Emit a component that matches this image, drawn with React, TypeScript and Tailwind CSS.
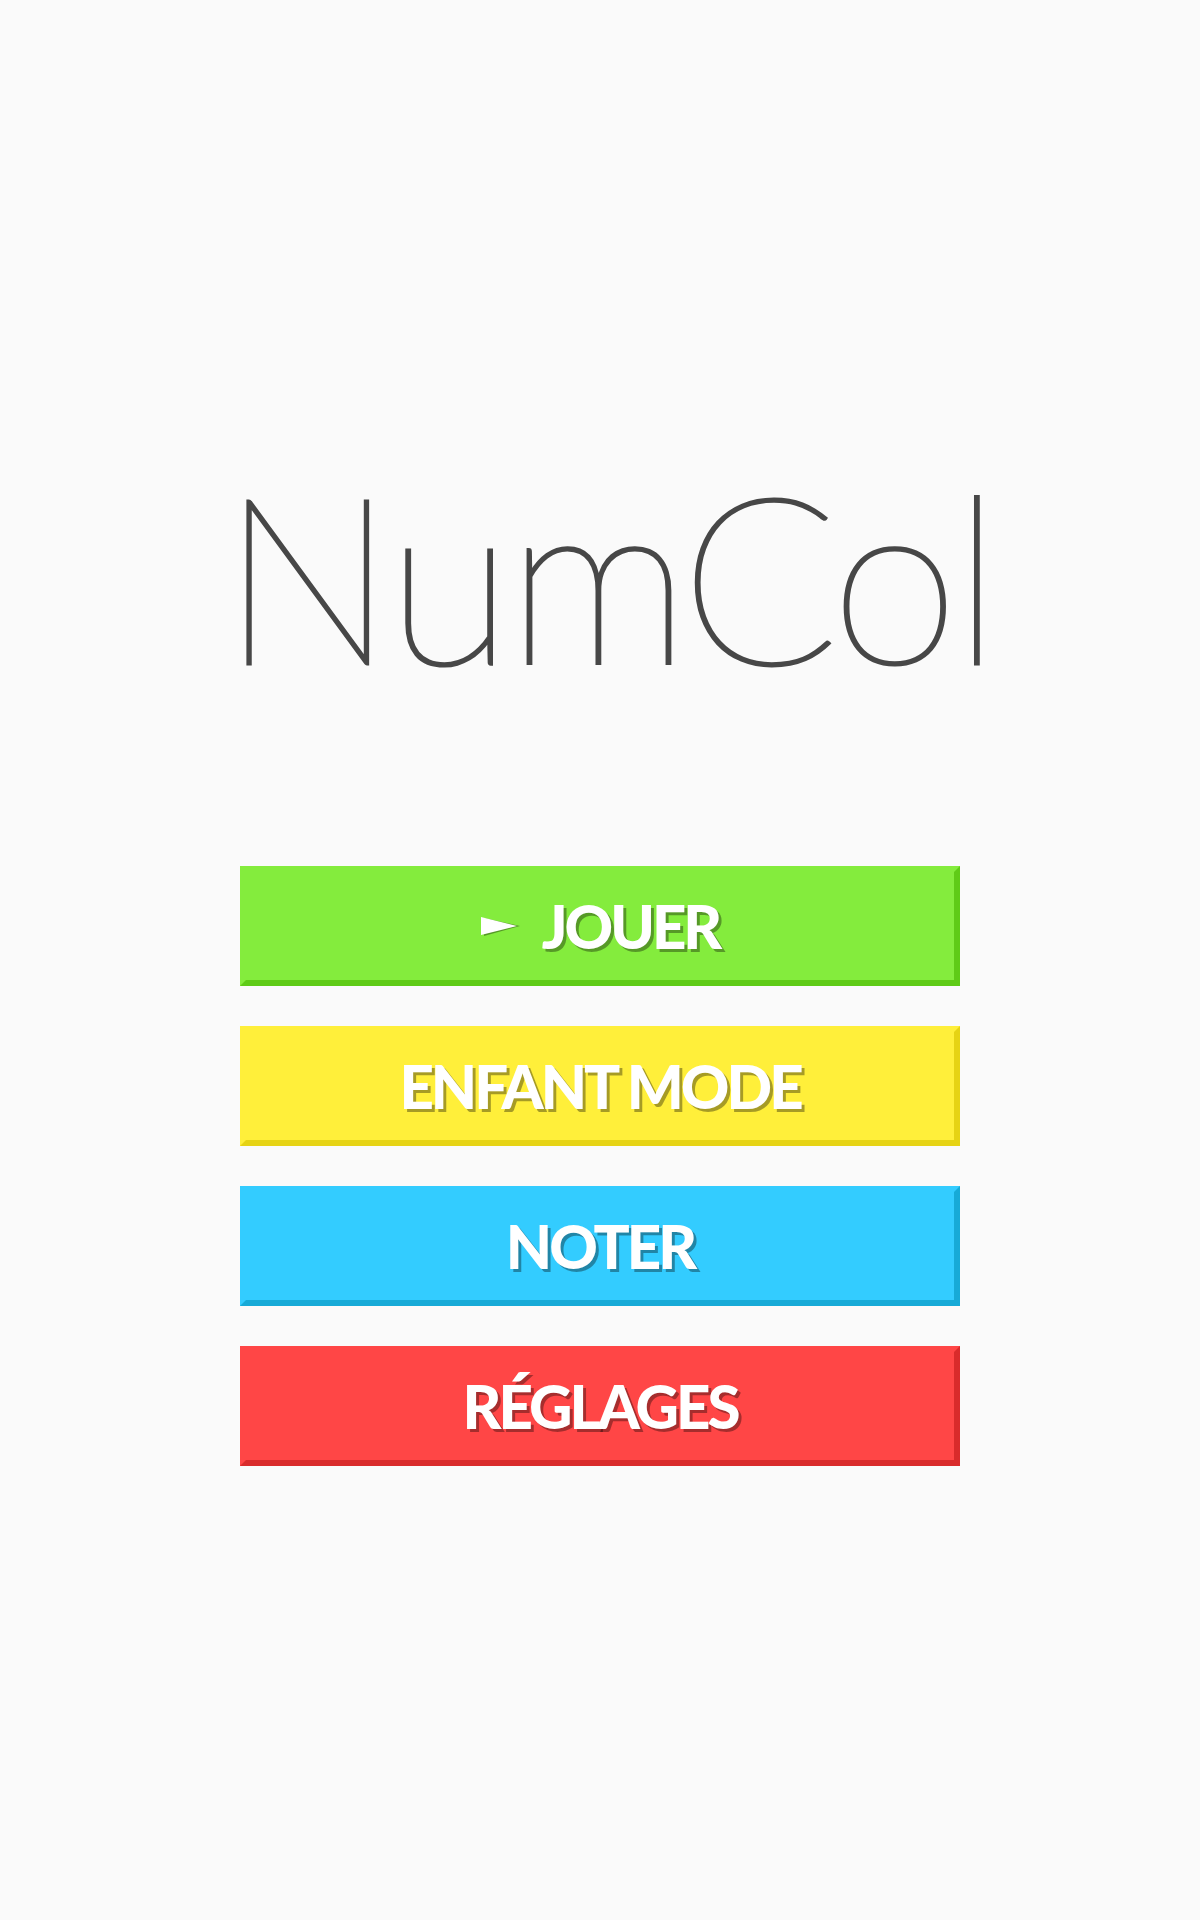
import React from "react";

type MenuButton = {
  label: string;
  bg: string;
  icon?: boolean;
};

const buttons: MenuButton[] = [
  {
    label: "JOUER",
    bg: "bg-[#84ec3d] border-t-[#84ec3d] border-l-[#84ec3d] border-r-[#5fcb17] border-b-[#5fcb17]",
    icon: true,
  },
  {
    label: "ENFANT MODE",
    bg: "bg-[#ffef3a] border-t-[#ffef3a] border-l-[#ffef3a] border-r-[#e6d314] border-b-[#e6d314]",
  },
  {
    label: "NOTER",
    bg: "bg-[#33ccff] border-t-[#33ccff] border-l-[#33ccff] border-r-[#17aad7] border-b-[#17aad7]",
  },
  {
    label: "RÉGLAGES",
    bg: "bg-[#ff4646] border-t-[#ff4646] border-l-[#ff4646] border-r-[#d92b2b] border-b-[#d92b2b]",
  },
];

function PlayArrow() {
  return (
    <svg width="40" height="22" viewBox="0 0 40 22" className="mr-[21px]">
      <polygon points="4,6 40,14 4,24" fill="rgba(0,0,0,0.35)" transform="translate(-1,-3)" />
      <polygon points="0,2 36,11 0,20" fill="#ffffff" />
    </svg>
  );
}

export default function App() {
  return (
    <div className="min-h-[1920px] w-full bg-[#fafafa] flex flex-col items-center pt-[458px]">
      {/* TITLE */}
      <h1 className="font-['Lato','Liberation_Sans',sans-serif] font-thin text-[232px] leading-none tracking-[-6px] text-[#474747] pl-[16px] [-webkit-text-stroke:3px_#474747]">
        NumCol
      </h1>

      {/* MENU */}
      <nav className="mt-[176px] flex flex-col gap-[40px] w-[720px]">
        {buttons.map((b) => (
          <button
            key={b.label}
            className={`h-[120px] w-full border-[6px] flex items-center justify-center ${b.bg}`}
          >
            {b.icon && <PlayArrow />}
            <span className="font-['Lato','Liberation_Sans',sans-serif] font-black text-[60px] leading-none tracking-[-3px] text-white [text-shadow:3px_3px_0_rgba(0,0,0,0.35)]">
              {b.label}
            </span>
          </button>
        ))}
      </nav>
    </div>
  );
}
